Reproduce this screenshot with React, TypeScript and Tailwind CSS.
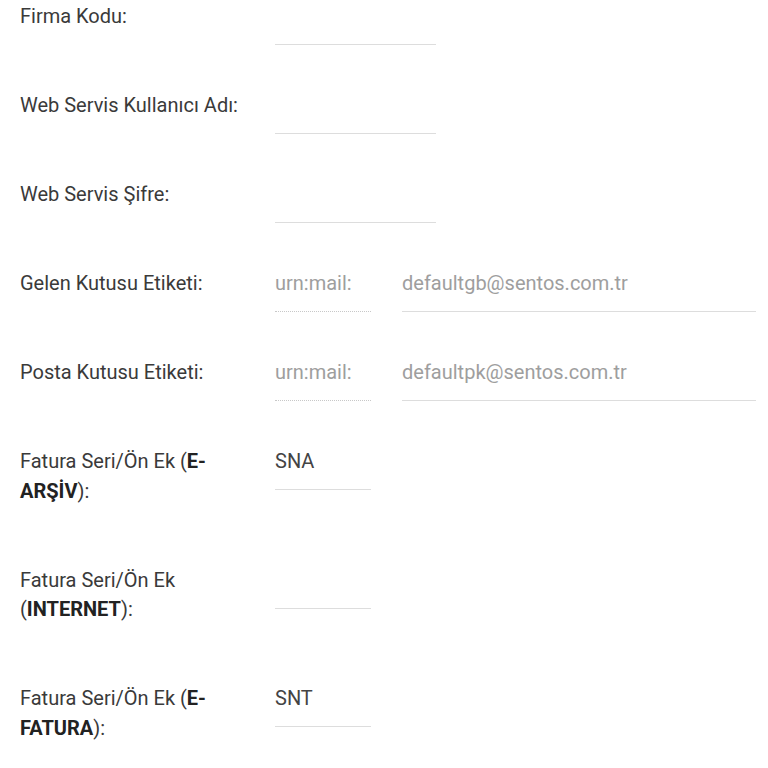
import React from "react";

type Row = {
  id: number;
  label: React.ReactNode;
  kind: "single" | "urn" | "short";
  value?: string;
  placeholder?: string;
};

const rows: Row[] = [
  { id: 1, label: "Firma Kodu:", kind: "single" },
  { id: 2, label: "Web Servis Kullanıcı Adı:", kind: "single" },
  { id: 3, label: "Web Servis Şifre:", kind: "single" },
  { id: 4, label: "Gelen Kutusu Etiketi:", kind: "urn", placeholder: "defaultgb@sentos.com.tr" },
  { id: 5, label: "Posta Kutusu Etiketi:", kind: "urn", placeholder: "defaultpk@sentos.com.tr" },
  {
    id: 6,
    label: (
      <>
        Fatura Seri/Ön Ek (<b className="font-bold text-[#222]">E-ARŞİV</b>):
      </>
    ),
    kind: "short",
    value: "SNA",
  },
  {
    id: 7,
    label: (
      <>
        Fatura Seri/Ön Ek (<b className="font-bold text-[#222]">INTERNET</b>):
      </>
    ),
    kind: "short",
  },
  {
    id: 8,
    label: (
      <>
        Fatura Seri/Ön Ek (<b className="font-bold text-[#222]">E-FATURA</b>):
      </>
    ),
    kind: "short",
    value: "SNT",
  },
];

function Field({
  width,
  value,
  placeholder,
  dotted,
}: {
  width: string;
  value?: string;
  placeholder?: string;
  dotted?: boolean;
}) {
  return (
    <div
      className={`${width} h-[43px] leading-[29.5px] ${
        dotted ? "border-b border-dotted border-[#c8c8c8]" : "border-b border-[#dddddd]"
      }`}
    >
      {value ? (
        <span className="text-[#444]">{value}</span>
      ) : (
        <span className="text-[#9e9e9e]">{placeholder}</span>
      )}
    </div>
  );
}

export default function App() {
  return (
    <div className="w-[768px] h-[768px] bg-white pt-[2px] font-['Roboto',sans-serif] text-[20px] overflow-hidden">
      {rows.map((row) => (
        <div key={row.id} className="flex items-start pl-5 mb-[45.5px]">
          <label className="w-[230px] shrink-0 pb-[14px] leading-[29.5px] text-[#3a3a3a]">{row.label}</label>
          <div className="ml-[25px] flex gap-[31px]">
            {row.kind === "single" && <Field width="w-[161px]" />}
            {row.kind === "urn" && (
              <>
                <Field width="w-[96px]" placeholder="urn:mail:" dotted />
                <Field width="w-[354px]" placeholder={row.placeholder} />
              </>
            )}
            {row.kind === "short" && <Field width="w-[96px]" value={row.value} />}
          </div>
        </div>
      ))}
    </div>
  );
}
